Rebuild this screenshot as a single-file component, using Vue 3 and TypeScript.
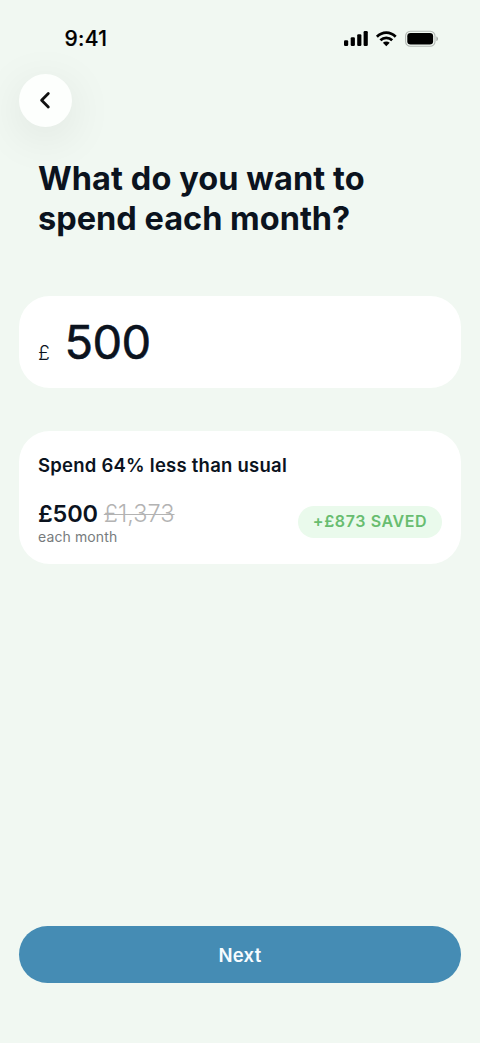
<script setup lang="ts">
import { computed, ref } from 'vue'

const budget = ref(500)
const usual = ref(1373)

const saved = computed(() => usual.value - budget.value)
const percentLess = computed(() => Math.round((saved.value / usual.value) * 100))
const usualLabel = computed(() => usual.value.toLocaleString('en-GB'))
</script>

<template>
  <main class="screen">
    <header class="status">
      <span class="time">9:41</span>
      <svg class="indicators" width="96" height="20" viewBox="0 0 96 20" aria-hidden="true">
        <rect x="0" y="10.2" width="4.2" height="5.8" rx="1.2" />
        <rect x="6.7" y="7.3" width="4.2" height="8.7" rx="1.2" />
        <rect x="13.2" y="4.3" width="4.2" height="11.7" rx="1.2" />
        <rect x="19.6" y="1" width="4.2" height="15" rx="1.2" />
        <g fill="none" stroke="#000" stroke-width="2.7">
          <path d="M32.9 6.7 C38.4 1.2 46.2 1.2 51.7 6.7" />
          <path d="M36.4 10.3 C39.8 7 44.8 7 48.2 10.3" />
        </g>
        <path d="M42.3 16.2 L38.9 12.8 C40.7 11.2 43.9 11.2 45.7 12.8 Z" />
        <rect x="61.6" y="1.2" width="29.4" height="15" rx="4.8" fill="none" stroke="#b3b8b4" stroke-width="1.1" />
        <rect x="63.3" y="2.9" width="25.8" height="11.6" rx="3.3" />
        <path d="M92.4 6.4 C94.5 7 94.5 10.4 92.4 11 Z" fill="#a5aaa6" />
      </svg>
    </header>

    <button class="back" type="button" aria-label="Back">
      <svg width="52" height="52" viewBox="0 0 52 52">
        <path d="M29.3 19.5 L22.6 26.3 L29.3 33.1" fill="none" stroke="#111" stroke-width="2.8" stroke-linecap="round" stroke-linejoin="round" />
      </svg>
    </button>

    <h1 class="title">
      <span class="line first">What do you want to</span>
      <span class="line second">spend each month?</span>
    </h1>

    <section class="card amount">
      <span class="currency">£</span>
      <span class="value">{{ budget }}</span>
    </section>

    <section class="card summary">
      <h2 class="headline">Spend {{ percentLess }}% less than usual</h2>
      <div class="row">
        <div>
          <div class="prices">
            <strong class="now">£{{ budget }}</strong>
            <s class="before">£{{ usualLabel }}</s>
          </div>
          <p class="period">each month</p>
        </div>
        <span class="badge">+£{{ saved }} SAVED</span>
      </div>
    </section>

    <button class="next" type="button">Next</button>
  </main>
</template>

<style>
body {
  background: #f1f8f2;
}
</style>

<style scoped>
.screen {
  box-sizing: border-box;
  display: flex;
  flex-direction: column;
  height: 1043px;
  padding: 0 19px 60px;
  overflow: hidden;
  background: #f1f8f2;
  color: #0b131e;
  font-family: Inter, "Liberation Sans", sans-serif;
}

.status {
  display: flex;
  flex: none;
  justify-content: space-between;
  height: 73.5px;
  padding: 0 2px 0 45.5px;
}

.time {
  padding-top: 26px;
  color: #000;
  font-size: 21px;
  font-weight: 500;
  line-height: 26px;
  letter-spacing: 0.3px;
  -webkit-text-stroke: 0.2px #000;
}

.indicators {
  margin: 30px 19px 0 0;
}

.back {
  flex: none;
  width: 53px;
  height: 53px;
  padding: 0;
  border: 0;
  border-radius: 50%;
  background: #fdfffd;
  box-shadow: 0 10px 48px rgba(0, 0, 0, 0.09);
}

.back svg {
  display: block;
}

.title {
  flex: none;
  margin: 32.5px 0 0 19px;
  font-size: 32.5px;
  font-weight: 700;
  line-height: 39.5px;
}

.line {
  display: block;
  white-space: nowrap;
}

.first {
  letter-spacing: 0.08px;
}

.card {
  box-sizing: border-box;
  flex: none;
  border-radius: 31px;
  background: #fff;
}

.amount {
  display: flex;
  align-items: baseline;
  height: 92px;
  margin-top: 58px;
  padding: 17px 20px 0 19px;
}

.currency {
  position: relative;
  top: 1px;
  width: 26.5px;
  font-size: 19.5px;
  font-weight: 300;
}

.value {
  font-size: 47px;
  font-weight: 400;
  line-height: 58px;
  letter-spacing: -0.6px;
  -webkit-text-stroke: 0.6px #0b131e;
}

.summary {
  height: 133px;
  margin-top: 43px;
  padding: 21px 19px 0;
}

.headline {
  margin: 0;
  font-size: 18.5px;
  font-weight: 600;
  line-height: 26px;
  letter-spacing: 0.24px;
  white-space: nowrap;
}

.row {
  display: flex;
  justify-content: space-between;
  margin-top: 20px;
}

.prices {
  display: flex;
  gap: 6px;
  height: 30px;
  font-size: 23.5px;
  line-height: 32px;
}

.now {
  font-weight: 600;
  letter-spacing: -0.2px;
}

.before {
  color: #b3b3b3;
  font-weight: 300;
  text-decoration-thickness: 1px;
}

.period {
  margin: 0;
  color: #777b7d;
  font-size: 14px;
  line-height: 18px;
  letter-spacing: 0.12px;
}

.badge {
  box-sizing: border-box;
  width: 144px;
  height: 32px;
  margin-top: 8px;
  border-radius: 16px;
  background: #eafaec;
  color: #68bd70;
  font-size: 16px;
  font-weight: 600;
  line-height: 31px;
  letter-spacing: 0.6px;
  text-align: center;
  white-space: nowrap;
}

.next {
  flex: none;
  height: 57px;
  margin-top: auto;
  padding: 0;
  border: 0;
  border-radius: 29px;
  background: #458cb4;
  color: #f7fcff;
  font-family: inherit;
  font-size: 18.5px;
  font-weight: 600;
  line-height: 58px;
  letter-spacing: 0.3px;
}
</style>
